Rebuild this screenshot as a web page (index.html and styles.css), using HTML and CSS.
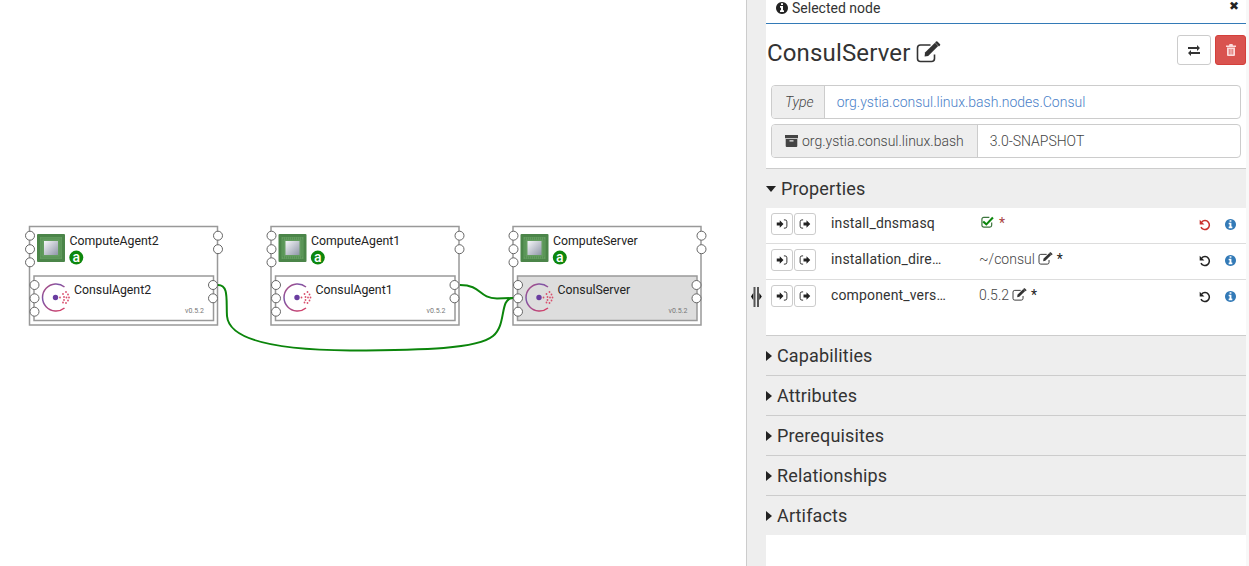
FILE: index.html
```html
<!DOCTYPE html>
<html lang="en">
<head>
    <meta charset="UTF-8">
    <meta name="viewport" content="width=device-width, initial-scale=1.0">
    <title>Topology editor</title>
    <link rel="stylesheet" href="styles.css">
</head>
<body>
    <!-- shared icons -->
    <svg class="sprite" aria-hidden="true">
        <symbol id="i-info" viewBox="128 128 1536 1536"><path d="M1152 1376v-160q0-14-9-23t-23-9h-96v-512q0-14-9-23t-23-9h-320q-14 0-23 9t-9 23v160q0 14 9 23t23 9h96v320h-96q-14 0-23 9t-9 23v160q0 14 9 23t23 9h448q14 0 23-9t9-23zm-128-896v-160q0-14-9-23t-23-9h-192q-14 0-23 9t-9 23v160q0 14 9 23t23 9h192q14 0 23-9t9-23zm640 416q0 209-103 385.5t-279.5 279.5-385.5 103-385.5-103-279.5-279.5-103-385.5 103-385.5 279.5-279.5 385.5-103 385.5 103 279.5 279.5 103 385.5z"/></symbol>
        <symbol id="i-edit" viewBox="0 0 24 22"><path fill="none" stroke="currentColor" stroke-width="1.600" d="M18 13.500v4a3 3 0 0 1-3 3H4a3 3 0 0 1-3-3V7a3 3 0 0 1 3-3h10"/><path d="M8.500 11.500 18.500 1.800l3.200 3.200-10 10-3.600.6z"/><path d="M19.500 0.600a1 1 0 0 1 1.400 0l2.500 2.500a1 1 0 0 1 0 1.400l-.9.900-3.900-3.900z"/></symbol>
        <symbol id="i-signin" viewBox="0 0 16 16"><path d="M1 6h4V3l5 5-5 5v-3H1z"/><path fill="none" stroke="currentColor" stroke-width="1.200" d="M10.500 2.500h1.500a2.500 2.500 0 0 1 2.500 2.500v6a2.500 2.500 0 0 1-2.500 2.500h-1.500"/></symbol>
        <symbol id="i-signout" viewBox="0 0 16 16"><path d="M6 6h4V3l5 5-5 5v-3H6z"/><path fill="none" stroke="currentColor" stroke-width="1.200" d="M5.500 2.500H4a2.500 2.500 0 0 0-2.500 2.500v6A2.500 2.500 0 0 0 4 13.500h1.500"/></symbol>
        <symbol id="i-undo" viewBox="0 0 14 14"><path fill="none" stroke="currentColor" stroke-width="1.800" d="M3.200 3.400A5.200 5.200 0 1 1 2.300 9.500"/><path d="M0.800 1v5.500h5.500z"/></symbol>
    </svg>

    <div class="app">
        <main class="canvas">
            <svg class="topology" width="746" height="566" viewBox="0 0 746 566">
                <defs>
                    <linearGradient id="chip" x1="0" y1="0" x2="1" y2="1">
                        <stop offset="0" stop-color="#f6f7f9"/>
                        <stop offset="1" stop-color="#8f96a8"/>
                    </linearGradient>
                    <linearGradient id="consul" x1="0" y1="0" x2="0.800" y2="1">
                        <stop offset="0" stop-color="#c9476f"/>
                        <stop offset="0.350" stop-color="#7b55a8"/>
                        <stop offset="1" stop-color="#d0406a"/>
                    </linearGradient>
                    <g id="compute">
                        <rect x="37" y="234" width="28" height="28" rx="1" fill="#4b8549"/>
                        <rect x="40" y="237" width="22" height="22" fill="#639c5f"/>
                        <rect x="41.500" y="238.500" width="19" height="19" fill="none" stroke="#558f53" stroke-width="2" stroke-dasharray="1 1"/>
                        <rect x="44" y="241" width="14" height="14" fill="url(#chip)"/>
                        <circle cx="76.300" cy="257.600" r="7" fill="#0d870d"/>
                    </g>
                    <g id="logo">
                        <path d="M64.500 287A13.500 13.500 0 1 0 64.500 308" fill="none" stroke="url(#consul)" stroke-width="1.500"/>
                        <circle cx="55.500" cy="297.500" r="2.700" fill="#6a3da0"/>
                        <g fill="#d9506e">
                            <circle cx="60" cy="297.500" r="0.900"/><circle cx="63" cy="294" r="0.900"/><circle cx="66" cy="292" r="0.900"/><circle cx="68" cy="294.500" r="0.900"/>
                            <circle cx="64" cy="297" r="0.900"/><circle cx="66.500" cy="297.500" r="0.900"/><circle cx="69" cy="297.500" r="0.900"/><circle cx="64" cy="300" r="0.900"/>
                            <circle cx="68" cy="300.500" r="0.900"/><circle cx="63" cy="302.500" r="0.900"/><circle cx="66" cy="303" r="0.900"/>
                        </g>
                    </g>
                    <g id="ports" class="port">
                        <circle cx="30" cy="235.700" r="4.500"/><circle cx="30" cy="249.200" r="4.500"/><circle cx="30" cy="262.300" r="4.500"/>
                        <circle cx="218" cy="235.700" r="4.500"/><circle cx="218" cy="249.200" r="4.500"/>
                        <circle cx="34.500" cy="285" r="4.500"/><circle cx="34.500" cy="298.300" r="4.500"/><circle cx="34.500" cy="311.700" r="4.500"/>
                        <circle cx="213" cy="285" r="4.500"/><circle cx="213" cy="298.300" r="4.500"/>
                    </g>
                </defs>

                <g>
                    <rect class="node" x="29.500" y="226.500" width="188" height="98.500"/>
                    <use href="#compute"/>
                    <text class="badge" x="76.300" y="261.800">a</text>
                    <text class="node-name" x="69.500" y="245">ComputeAgent2</text>
                    <rect class="node" x="34" y="276" width="179.500" height="44.500"/>
                    <use href="#logo"/>
                    <text class="node-name" x="74" y="294">ConsulAgent2</text>
                    <text class="node-version" x="185" y="312.500">v0.5.2</text>
                    <use href="#ports"/>
                </g>
                <g transform="translate(241.500 0)">
                    <rect class="node" x="29.500" y="226.500" width="188" height="98.500"/>
                    <use href="#compute"/>
                    <text class="badge" x="76.300" y="261.800">a</text>
                    <text class="node-name" x="69.500" y="245">ComputeAgent1</text>
                    <rect class="node" x="34" y="276" width="179.500" height="44.500"/>
                    <use href="#logo"/>
                    <text class="node-name" x="74" y="294">ConsulAgent1</text>
                    <text class="node-version" x="185" y="312.500">v0.5.2</text>
                    <use href="#ports"/>
                </g>
                <g transform="translate(483.500 0)">
                    <rect class="node" x="29.500" y="226.500" width="188" height="98.500"/>
                    <use href="#compute"/>
                    <text class="badge" x="76.300" y="261.800">a</text>
                    <text class="node-name" x="69.500" y="245">ComputeServer</text>
                    <rect class="node node-selected" x="34" y="276" width="179.500" height="44.500"/>
                    <use href="#logo"/>
                    <text class="node-name" x="74" y="294">ConsulServer</text>
                    <text class="node-version" x="185" y="312.500">v0.5.2</text>
                    <use href="#ports"/>
                </g>

                <path class="link" d="M218 285C229 285 226 300 227 316C229 340 275 350 350 350.500C425 350 477 349 493 336C507 325 499 298 513 298"/>
                <path class="link" d="M460 285C482 285 478 298 497 298.500L513 298"/>
            </svg>
        </main>

        <aside class="sidebar">
            <div class="handle">
                <svg width="11" height="20" viewBox="0 0 11 20"><path fill="#555" d="M2.500 0h2v20h-2zM6 0h2v20H6z"/><path fill="#111" d="M2.200 6v7L0 9.500zM8.300 6v7l2.500-3.500z"/></svg>
            </div>
            <div class="panel">
                <header class="panel-head">
                    <span class="panel-title"><svg class="ico ico-head"><use href="#i-info"/></svg>Selected node</span>
                    <span class="close">✖</span>
                </header>

                <div class="title-row">
                    <h1>ConsulServer</h1>
                    <svg class="ico ico-title"><use href="#i-edit"/></svg>
                    <div class="title-buttons">
                        <button class="btn">
                            <svg width="12" height="11" viewBox="0 0 12 11"><path d="M0 2h9V0l3 3-3 3V4H0zM12 7H3V5L0 8l3 3V9h9z"/></svg>
                        </button>
                        <button class="btn btn-danger">
                            <svg width="10" height="12" viewBox="0 0 10 12"><path fill="#fbdcdc" d="M3.500 0h3l.5 1.500h3V3H0V1.500h3zM1 3.500h8V11a1 1 0 0 1-1 1H2a1 1 0 0 1-1-1zM2.800 5v5.500h.8V5zM4.600 5v5.500h.8V5zM6.400 5v5.500h.8V5z"/></svg>
                        </button>
                    </div>
                </div>

                <div class="input-group">
                    <span class="addon addon-type">Type</span>
                    <span class="field field-link">org.ystia.consul.linux.bash.nodes.Consul</span>
                </div>
                <div class="input-group">
                    <span class="addon">
                        <svg class="archive" width="13" height="12" viewBox="0 0 13 12"><path d="M0 0h13v3.300H0zM.7 4h11.600v7a1 1 0 0 1-1 1H1.700a1 1 0 0 1-1-1zM4.500 5.300v1.200h4V5.300z"/></svg>org.ystia.consul.linux.bash
                    </span>
                    <span class="field">3.0-SNAPSHOT</span>
                </div>

                <section class="section section-open">
                    <h2><span class="caret caret-down"></span>Properties</h2>
                    <div class="props">
                        <div class="prop">
                            <div class="prop-buttons">
                                <button class="btn-xs"><svg class="ico-xs"><use href="#i-signin"/></svg></button>
                                <button class="btn-xs"><svg class="ico-xs"><use href="#i-signout"/></svg></button>
                            </div>
                            <span class="prop-name">install_dnsmasq</span>
                            <span class="prop-value">
                                <svg class="check" width="13" height="13" viewBox="0 0 14 14"><path fill="none" stroke="#3c763d" stroke-width="1.300" d="M11.500 8v3a2 2 0 0 1-2 2H3a2 2 0 0 1-2-2V4.500a2 2 0 0 1 2-2h6"/><path fill="#0d870d" d="M3.200 6.200 5.800 8.700 12 2l1.700 1.600-7.900 8-4.300-3.800z"/></svg>
                                <span class="star star-red">*</span>
                            </span>
                            <svg class="ico-action undo-red"><use href="#i-undo"/></svg>
                            <svg class="ico-action info"><use href="#i-info"/></svg>
                        </div>
                        <div class="prop">
                            <div class="prop-buttons">
                                <button class="btn-xs"><svg class="ico-xs"><use href="#i-signin"/></svg></button>
                                <button class="btn-xs"><svg class="ico-xs"><use href="#i-signout"/></svg></button>
                            </div>
                            <span class="prop-name">installation_dire…</span>
                            <span class="prop-value">~/consul<svg class="ico-edit"><use href="#i-edit"/></svg><span class="star">*</span></span>
                            <svg class="ico-action"><use href="#i-undo"/></svg>
                            <svg class="ico-action info"><use href="#i-info"/></svg>
                        </div>
                        <div class="prop prop-last">
                            <div class="prop-buttons">
                                <button class="btn-xs"><svg class="ico-xs"><use href="#i-signin"/></svg></button>
                                <button class="btn-xs"><svg class="ico-xs"><use href="#i-signout"/></svg></button>
                            </div>
                            <span class="prop-name">component_vers…</span>
                            <span class="prop-value">0.5.2<svg class="ico-edit"><use href="#i-edit"/></svg><span class="star">*</span></span>
                            <svg class="ico-action"><use href="#i-undo"/></svg>
                            <svg class="ico-action info"><use href="#i-info"/></svg>
                        </div>
                    </div>
                </section>

                <section class="section"><h2><span class="caret"></span>Capabilities</h2></section>
                <section class="section"><h2><span class="caret"></span>Attributes</h2></section>
                <section class="section"><h2><span class="caret"></span>Prerequisites</h2></section>
                <section class="section"><h2><span class="caret"></span>Relationships</h2></section>
                <section class="section"><h2><span class="caret"></span>Artifacts</h2></section>
            </div>
            <div class="panel-edge"></div>
        </aside>
    </div>
</body>
</html>
```

FILE: styles.css
```css
* {
    box-sizing: border-box;
}
html, body {
    margin: 0;
    height: 100%;
    overflow: hidden;
}
body {
    font-family: Roboto, "Liberation Sans", sans-serif;
    font-size: 14px;
    color: #333;
    background: #fff;
}
.sprite {
    position: absolute;
    width: 0;
    height: 0;
}
.app {
    display: flex;
    height: 566px;
}

/* topology canvas */
.canvas {
    width: 746px;
    flex: none;
}
.topology {
    display: block;
}
.node {
    fill: #fff;
    stroke: #999;
    stroke-width: 1.5;
}
.node-selected {
    fill: #ddd;
}
.node-name {
    font-size: 12.3px;
    fill: #222;
}
.node-version {
    font-size: 7px;
    fill: #777;
}
.badge {
    font-size: 14px;
    font-weight: 500;
    fill: #fff;
    text-anchor: middle;
}
.port circle {
    fill: #fff;
    stroke: #666;
    stroke-width: 1;
}
.link {
    fill: none;
    stroke: #0b850b;
    stroke-width: 2;
}

/* right side */
.sidebar {
    flex: 1;
    display: flex;
    align-items: flex-start;
    height: 566px;
    background: #eee;
    border-left: 1px solid #ccc;
}
.handle {
    width: 19px;
    flex: none;
    height: 100%;
    display: flex;
    justify-content: center;
    padding-top: 287px;
}
.panel {
    width: 480px;
    height: 100%;
    flex: none;
    background: #fff;
}
.panel-edge {
    flex: 1;
    height: 100%;
    background: #f8f8f8;
}
.panel-head {
    height: 24px;
    display: flex;
    justify-content: space-between;
    padding: 0 7px 0 10px;
    border-bottom: 1px solid #337ab7;
    line-height: 16px;
}
.panel-title {
    display: flex;
    align-items: flex-start;
}
.ico {
    fill: currentColor;
}
.ico-head {
    width: 12px;
    height: 12px;
    margin: 2px 4px 0 0;
    color: #222;
}
.close {
    font-size: 12px;
    line-height: 13px;
    color: #222;
}
.title-row {
    height: 61px;
    display: flex;
    align-items: flex-start;
    padding: 11px 0 0 1px;
}
h1 {
    margin: 4px 6px 0 0;
    font-size: 24px;
    font-weight: 400;
    line-height: 28px;
    letter-spacing: 0.15px;
    color: #333;
}
.ico-title {
    width: 25px;
    height: 22px;
    margin-top: 6px;
    color: #333;
}
.title-buttons {
    margin-left: auto;
    display: flex;
    gap: 4px;
}
.btn {
    width: 34px;
    height: 30px;
    padding: 0;
    display: flex;
    align-items: center;
    justify-content: center;
    background: #fff;
    border: 1px solid #ccc;
    border-radius: 3px;
    color: #333;
}
.btn svg {
    fill: currentColor;
}
.btn-danger {
    width: 31px;
    background: #d9534f;
    border-color: #d43f3a;
}
.input-group {
    display: flex;
    width: 470px;
    height: 34px;
    margin: 0 0 5px 5px;
    border: 1px solid #ccc;
    border-radius: 4px;
    overflow: hidden;
    font-weight: 300;
}
.addon {
    display: flex;
    align-items: center;
    padding: 0 13px 0 13px;
    background: #eee;
    border-right: 1px solid #ccc;
    color: #444;
}
.addon-type {
    padding-right: 10px;
    font-style: italic;
}
.archive {
    fill: #444;
    margin-right: 4px;
}
.field {
    display: flex;
    align-items: center;
    padding-left: 12px;
    color: #444;
}
.field-link {
    color: #4a80c8;
}

/* collapsible sections */
.section {
    margin-top: 0;
    background: #eee;
    border-top: 1px solid #ccc;
}
.section-open {
    margin-top: 10px;
}
h2 {
    display: flex;
    align-items: center;
    height: 39px;
    margin: 0;
    font-size: 18px;
    font-weight: 400;
    letter-spacing: 0.15px;
    color: #333;
}
.caret {
    width: 0;
    height: 0;
    margin-right: 5px;
    border-style: solid;
    border-width: 5px 0 5px 6px;
    border-color: transparent transparent transparent #222;
}
.caret-down {
    border-width: 6px 5px 0 5px;
    border-color: #222 transparent transparent transparent;
}
.props {
    background: #fff;
}
.prop {
    display: flex;
    align-items: flex-start;
    height: 36px;
    padding: 5px 0 0 5px;
    border-bottom: 1px solid #ddd;
}
.prop-last {
    height: 55px;
    border-bottom: 0;
}
.prop-buttons {
    display: flex;
    flex: none;
    gap: 1px;
    width: 60px;
}
.btn-xs {
    width: 22px;
    height: 22px;
    padding: 0;
    display: flex;
    align-items: center;
    justify-content: center;
    background: #fff;
    border: 1px solid #ccc;
    border-radius: 3px;
    color: #222;
}
.ico-xs {
    width: 12px;
    height: 12px;
    fill: currentColor;
}
.prop-name {
    width: 116px;
    flex: none;
    white-space: nowrap;
    line-height: 20px;
    letter-spacing: 0.15px;
}
.prop-value {
    flex: 1;
    display: flex;
    align-items: flex-start;
    padding-left: 32px;
    line-height: 20px;
    font-weight: 300;
    color: #444;
}
.check {
    margin: 2px 5px 0 2px;
}
.ico-edit {
    width: 15px;
    height: 13px;
    margin: 3px 4px 0 3px;
    fill: currentColor;
    color: #333;
}
.star {
    color: #222;
    font-weight: 400;
}
.star-red {
    color: #a94442;
}
.ico-action {
    width: 12px;
    height: 12px;
    margin: 6px 14px 0 0;
    flex: none;
    fill: currentColor;
    color: #222;
}
.undo-red {
    color: #c9302c;
}
.info {
    width: 11px;
    height: 11px;
    margin: 6px 10px 0 0;
    color: #337ab7;
}
```
